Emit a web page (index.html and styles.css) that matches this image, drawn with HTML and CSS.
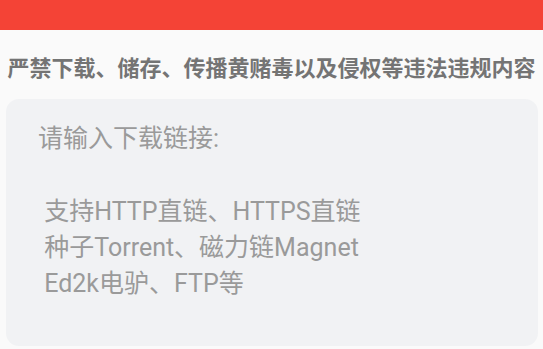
FILE: index.html
```html
<!DOCTYPE html>
<html lang="zh-CN">
<head>
<meta charset="utf-8">
<link rel="stylesheet" href="styles.css">
</head>
<body>
<div class="topbar"></div>
<div class="notice">严禁下载、储存、传播黄赌毒以及侵权等违法违规内容</div>
<div class="card">
<div class="input">请输入下载链接:

 支持HTTP直链、HTTPS直链
 种子Torrent、磁力链Magnet
 Ed2k电驴、FTP等</div>
</div>
</body>
</html>
```
FILE: styles.css
```css
html, body {
  margin: 0;
  padding: 0;
  background: #fafafa;
  width: 543px;
  height: 349px;
  overflow: hidden;
  font-family: Roboto, "Noto Sans CJK SC", sans-serif;
}
.topbar {
  height: 30px;
  background: #f44336;
}
.notice {
  margin-top: 25px;
  height: 28px;
  line-height: 28px;
  font-size: 22px;
  font-weight: bold;
  color: #747474;
  text-align: center;
  white-space: nowrap;
}
.card {
  margin: 16px 5px 0 6px;
  height: 247px;
  box-sizing: border-box;
  background: #f1f2f4;
  border-radius: 13px;
  padding: 22px 0 0 32px;
}
.input {
  white-space: pre-wrap;
  font-size: 25px;
  line-height: 36.25px;
  color: #9a9a9a;
}
```
